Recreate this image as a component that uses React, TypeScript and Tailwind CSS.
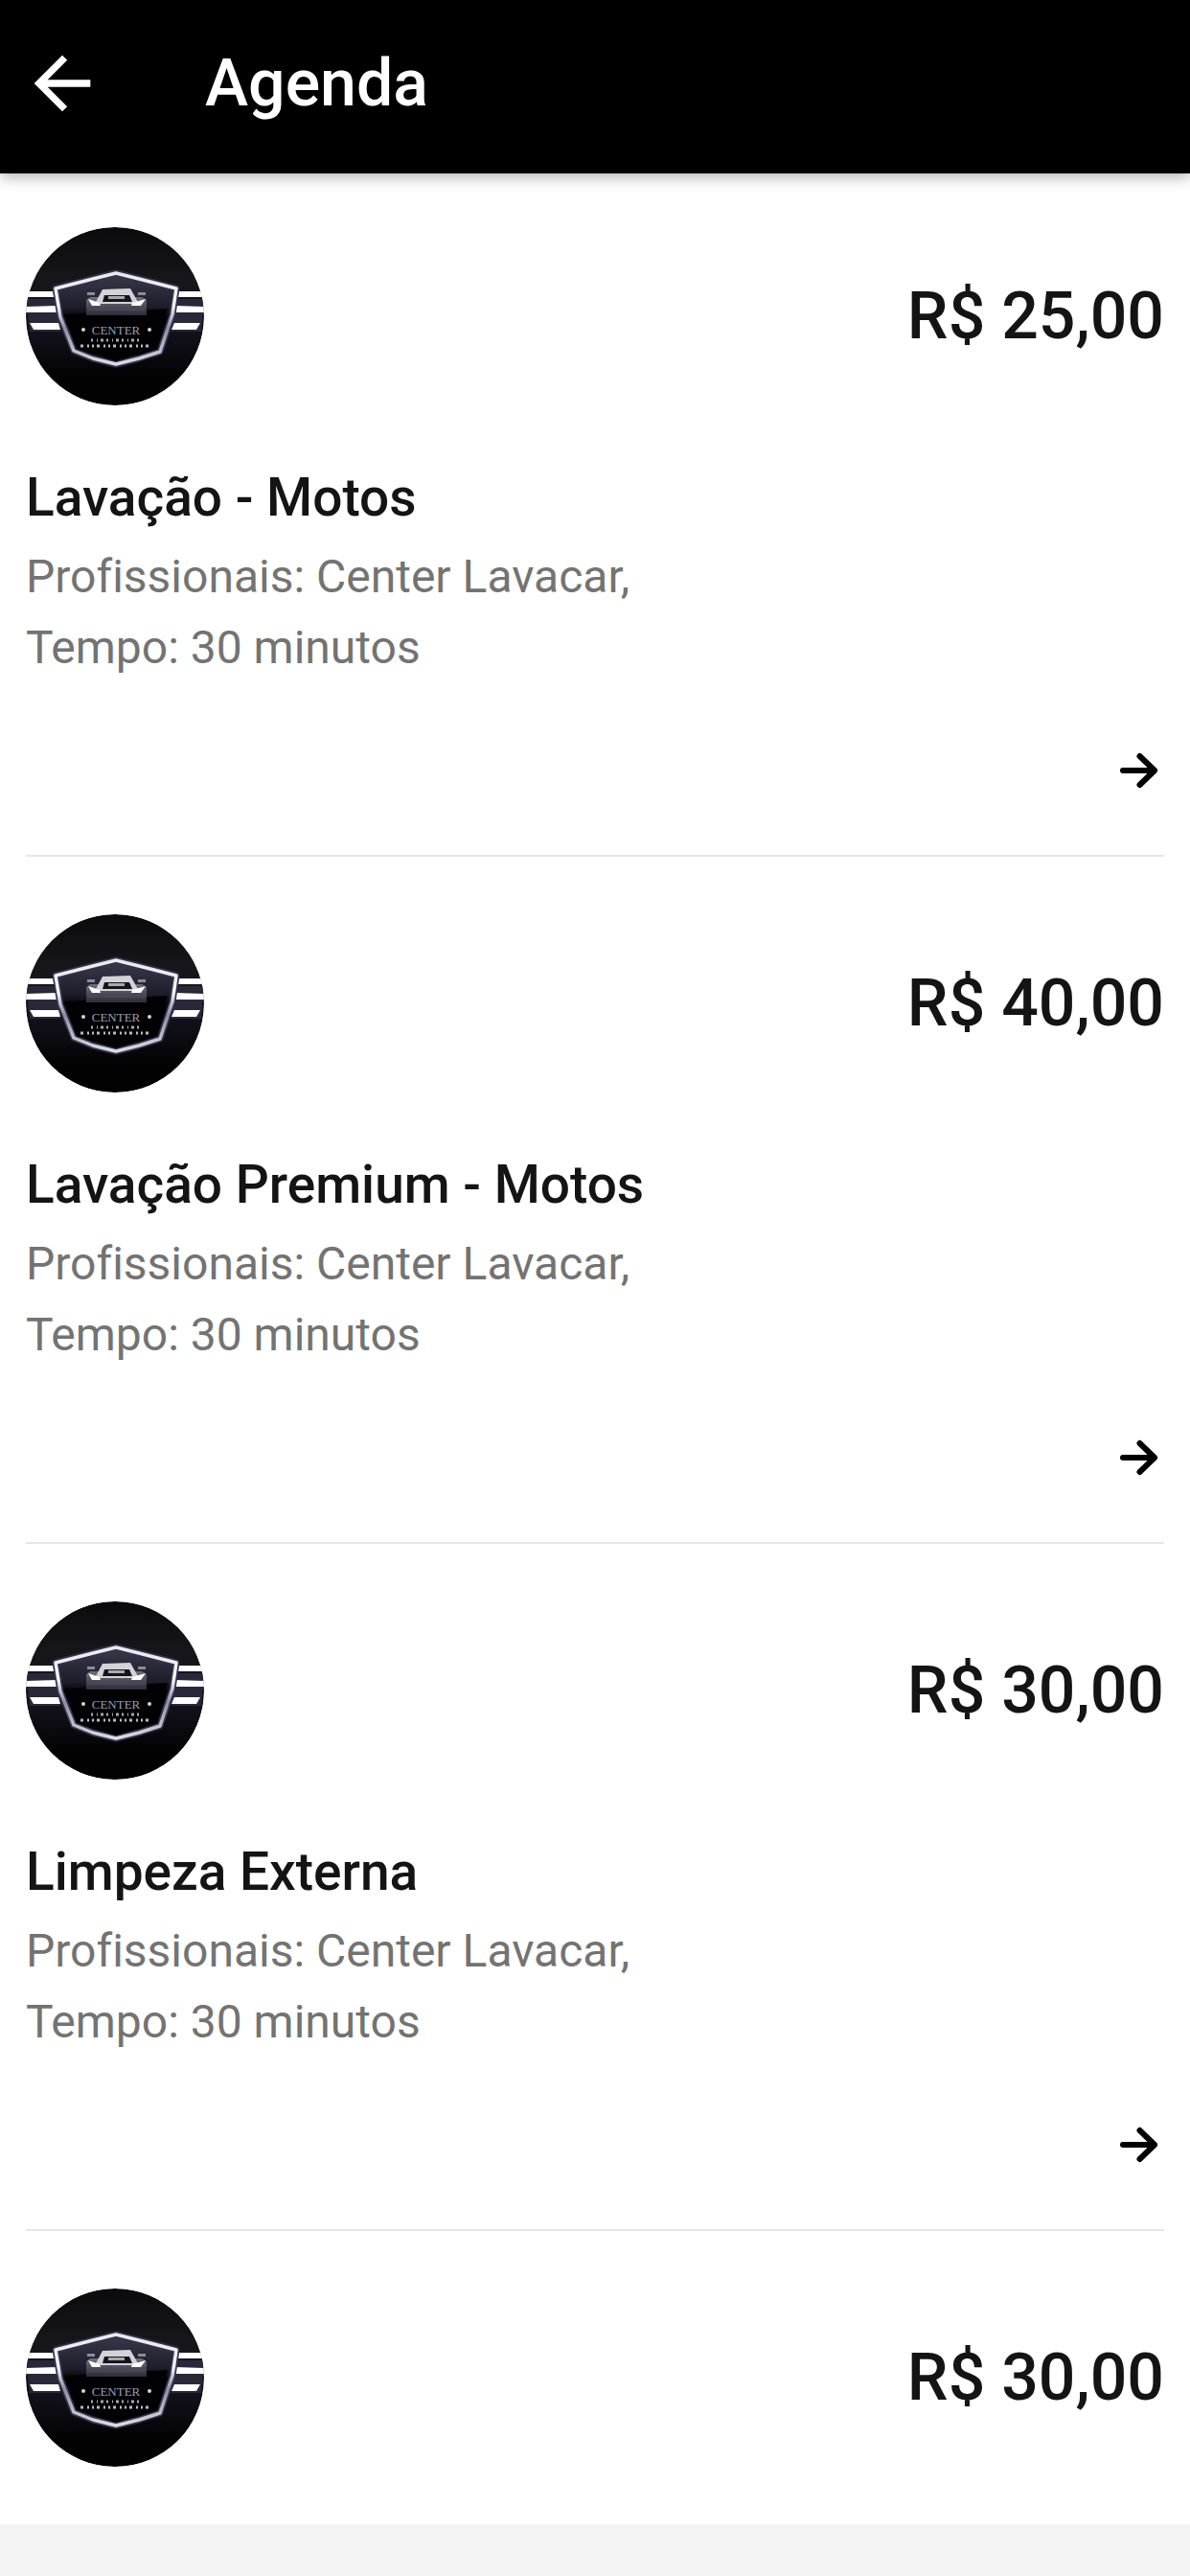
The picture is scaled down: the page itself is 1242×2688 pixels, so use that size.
import React from 'react';

interface Service {
  id: number;
  price: string;
  name?: string;
  professionals?: string;
  duration?: string;
}

const services: Service[] = [
  { id: 1, price: 'R$ 25,00', name: 'Lavação - Motos', professionals: 'Center Lavacar,', duration: '30 minutos' },
  { id: 2, price: 'R$ 40,00', name: 'Lavação Premium - Motos', professionals: 'Center Lavacar,', duration: '30 minutos' },
  { id: 3, price: 'R$ 30,00', name: 'Limpeza Externa', professionals: 'Center Lavacar,', duration: '30 minutos' },
  { id: 4, price: 'R$ 30,00' },
];

const BackIcon: React.FC = () => (
  <svg viewBox="0 0 24 24" className="w-[88px] h-[88px]" fill="currentColor" aria-hidden="true">
    <path d="M20 11H7.83l5.59-5.59L12 4l-8 8 8 8 1.41-1.41L7.83 13H20v-2z" />
  </svg>
);

const ForwardIcon: React.FC = () => (
  <svg
    viewBox="0 0 48 48"
    className="w-12 h-12"
    fill="none"
    stroke="currentColor"
    strokeWidth="6"
    strokeLinecap="round"
    strokeLinejoin="round"
    aria-hidden="true"
  >
    <path d="M5 24h33M22.5 9L38 24l-15.5 15" />
  </svg>
);

// Round badge: shield with a car, wings on both sides
const ShopLogo: React.FC = () => (
  <svg viewBox="0 0 186 186" className="w-[186px] h-[186px] shrink-0 rounded-full" aria-hidden="true">
    <defs>
      <linearGradient id="logoBack" x1="0" y1="0" x2="0" y2="1">
        <stop offset="0" stopColor="#0b0b0d" />
        <stop offset="0.3" stopColor="#17161b" />
        <stop offset="0.6" stopColor="#12111a" />
        <stop offset="0.85" stopColor="#020203" />
      </linearGradient>
      <linearGradient id="logoShield" x1="0" y1="0" x2="0" y2="1">
        <stop offset="0" stopColor="#3b3a4c" />
        <stop offset="0.38" stopColor="#1d1c29" />
        <stop offset="0.5" stopColor="#020204" />
      </linearGradient>
      <linearGradient id="logoRim" x1="0" y1="0" x2="0" y2="1">
        <stop offset="0" stopColor="#e9e9ee" />
        <stop offset="0.35" stopColor="#f4f4f8" />
        <stop offset="0.6" stopColor="#8e8da6" />
        <stop offset="1" stopColor="#dcdce4" />
      </linearGradient>
      <linearGradient id="logoCar" x1="0" y1="0" x2="0" y2="1">
        <stop offset="0" stopColor="#6f6e7b" />
        <stop offset="1" stopColor="#2c2b36" />
      </linearGradient>
    </defs>
    <circle cx="93" cy="93" r="93" fill="url(#logoBack)" />
    <path d="M0 75h36v34H4zM186 75h-34v34h31z" fill="#292838" />
    <path d="M3 67h26v6H0zM0 83l32-1 2 7H0zM4 100h30l2 7H8z" fill="#fff" />
    <path d="M184 67h-26v6h28zM186 83l-30-1-3 7h33zM182 100h-27l-3 7h26z" fill="#fff" />
    <path
      d="M31 64L70 54 94 48l24 6 39 10-4 27-13 39-22 7-24 6-24-6-20-8L36 94z"
      fill="url(#logoShield)"
      stroke="#34334a"
      strokeWidth="7"
      strokeLinejoin="round"
    />
    <path d="M40 91l108-6-13 42-41 13-41-13z" fill="#020204" />
    <path
      d="M31 64L70 54 94 48l24 6 39 10-4 27-13 39-22 7-24 6-24-6-20-8L36 94z"
      fill="none"
      stroke="url(#logoRim)"
      strokeWidth="3.5"
      strokeLinejoin="round"
    />
    <path d="M63 76l4-3h54l5 3v16H63z" fill="url(#logoCar)" />
    <path d="M72 80l8-15 29-1 9 16z" fill="#d2d2d8" />
    <path d="M82 71h26l3 7H80z" fill="#15151b" />
    <path d="M86 72h17v3H86z" fill="#a9a9b0" />
    <path d="M64 68h8v3h-8zM117 68h8v3h-8z" fill="#8d8c96" />
    <path d="M65 75l12 4 1 3h-9zM125 75l-14 4-1 3h10z" fill="#fff" />
    <path d="M65 86h59" stroke="#484753" strokeWidth="2" />
    <text x="94" y="112" textAnchor="middle" fontSize="13" fill="#9d9da8" className="font-['Liberation_Serif',serif]">
      CENTER
    </text>
    <circle cx="60" cy="107" r="2" fill="#d4d4da" />
    <circle cx="129" cy="107" r="2" fill="#d4d4da" />
    <path d="M68 118h54" stroke="#a6a6b0" strokeWidth="3" strokeDasharray="2 4 1 3 3 3" />
    <path d="M57 124h75" stroke="#b9b9c3" strokeWidth="3" strokeDasharray="3 4 2 3 2 3" />
  </svg>
);

const ServiceItem: React.FC<{ service: Service }> = ({ service }) => (
  <li className="mx-[27px] pt-15 first:pt-14 border-b-2 border-[#e6e6e6] last:border-b-0">
    <div className="flex items-center justify-between">
      <ShopLogo />
      <span className="text-[68px] leading-[72px] font-medium">{service.price}</span>
    </div>
    {service.name && (
      <>
        <h2 className="mt-16 text-[55px] leading-[64px] font-medium">{service.name}</h2>
        <div className="mt-3.5 text-[48px] leading-[74px] text-[#737373]">
          <p>Profissionais: {service.professionals}</p>
          <p>Tempo: {service.duration}</p>
        </div>
        <div className="flex justify-end pt-[67px] pb-16">
          <button type="button" aria-label={service.name} className="cursor-pointer text-black">
            <ForwardIcon />
          </button>
        </div>
      </>
    )}
  </li>
);

const App: React.FC = () => {
  return (
    <div className="flex flex-col h-screen overflow-hidden bg-white text-[#141414] font-[Roboto,sans-serif] [font-variant-ligatures:none]">
      <header className="relative shrink-0 flex items-center gap-[105px] pl-[21px] pt-[43px] pb-[50px] bg-black text-white shadow-[0_4px_14px_rgba(0,0,0,0.3)]">
        <button type="button" aria-label="Voltar" className="cursor-pointer">
          <BackIcon />
        </button>
        <h1 className="text-[68px] leading-[76px] font-medium">Agenda</h1>
      </header>
      <main className="flex-1 min-h-0 overflow-hidden">
        <ul>
          {services.map(service => (
            <ServiceItem key={service.id} service={service} />
          ))}
        </ul>
      </main>
      <footer className="shrink-0 h-[54px] bg-[#f4f4f4]" />
    </div>
  );
};

export default App;
